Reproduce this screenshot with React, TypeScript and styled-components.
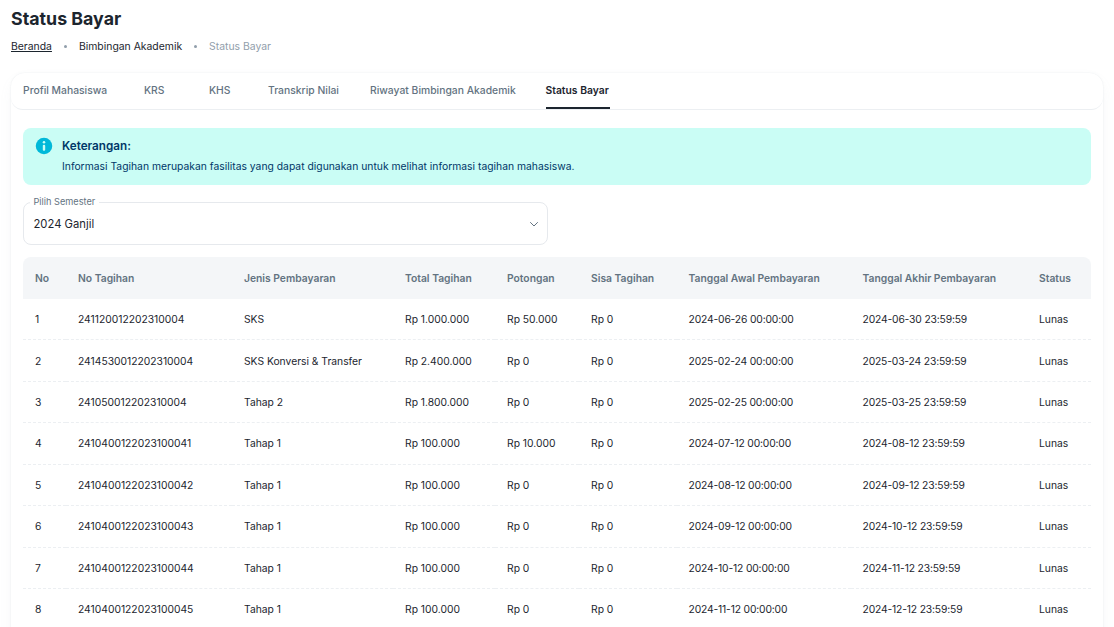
import React from "react";
import styled, { createGlobalStyle } from "styled-components";

const Global = createGlobalStyle`
  html, body { margin: 0; padding: 0; background: #fff; overflow: hidden; height: 627px; }
  body { font-family: Inter, "Liberation Sans", sans-serif; color: #1c252e; }
  * { box-sizing: border-box; }
`;

const Page = styled.div`
  padding: 8px 11px 0 11px;
  width: 1114px;
`;
const Title = styled.h1`
  margin: 0;
  font-size: 17.8px;
  line-height: 21px;
  font-weight: 700;
  color: #1c252e;
`;
const Crumbs = styled.nav`
  display: flex;
  align-items: center;
  margin-top: 9px;
  height: 16px;
  font-size: 10.4px;
  color: #1c252e;
`;
const CrumbLink = styled.a`
  text-decoration: underline;
`;
const CrumbMuted = styled.span`
  color: #919eab;
`;
const Dot = styled.span`
  width: 3px;
  height: 3px;
  border-radius: 50%;
  background: #919eab;
  margin: 0 12px;
`;
const Card = styled.section`
  margin-top: 19px;
  border-radius: 14px;
  background: #fff;
  box-shadow: 0 0 2px rgba(145, 158, 171, 0.2), 0 6px 16px -4px rgba(145, 158, 171, 0.12);
`;
const Tabs = styled.div`
  display: flex;
  align-items: stretch;
  height: 37px;
  padding-left: 12px;
  gap: 30px;
  border-bottom: 1px solid #eceff2;
  border-radius: 0 0 12px 12px;
`;
const Tab = styled.div<{ $active?: boolean; $w: number }>`
  width: ${(p) => p.$w}px;
  padding-bottom: 2px;
  white-space: nowrap;
  display: flex;
  align-items: center;
  font-size: 10.35px;
  font-weight: ${(p) => (p.$active ? 600 : 500)};
  color: ${(p) => (p.$active ? "#1c252e" : "#637381")};
  box-shadow: ${(p) => (p.$active ? "inset 0 -2px 0 #1c252e" : "none")};
`;
const Body = styled.div`
  padding: 18px 12px 24px 12px;
`;
const Alert = styled.div`
  display: flex;
  height: 57px;
  padding: 9px 12px;
  gap: 9px;
  border-radius: 8px;
  background: #cafdf5;
  color: #003768;
`;
const AlertIcon = styled.svg`
  width: 18px;
  height: 18px;
  flex: none;
`;
const AlertTitle = styled.div`
  font-size: 11.7px;
  font-weight: 600;
  line-height: 18px;
`;
const AlertText = styled.div`
  margin-top: 2px;
  font-size: 10.35px;
  line-height: 18px;
`;
const SelectBox = styled.div`
  position: relative;
  margin-top: 17px;
  width: 525px;
  height: 43px;
  display: flex;
  align-items: center;
  justify-content: space-between;
  padding: 0 7px 0 9.5px;
  border: 1px solid #e6e9ed;
  border-radius: 8px;
  font-size: 11.25px;
  color: #1c252e;
`;
const SelectLabel = styled.span`
  position: absolute;
  left: 5.5px;
  top: -7px;
  padding: 0 4px;
  background: #fff;
  font-size: 9.2px;
  line-height: 12px;
  color: #637381;
`;
const Chevron = styled.svg`
  width: 12px;
  height: 12px;
  color: #637381;
`;
const Table = styled.table`
  margin-top: 12px;
  width: 1068px;
  table-layout: fixed;
  border-collapse: separate;
  border-spacing: 0;
  font-size: 10.3px;
`;
const Th = styled.th<{ $w: number }>`
  width: ${(p) => p.$w}px;
  height: 42px;
  padding: 0 0 0 12px;
  background: #f4f6f8;
  color: #637381;
  font-weight: 600;
  text-align: left;
  white-space: nowrap;
  &:first-child { border-radius: 8px 0 0 0; }
  &:last-child { border-radius: 0 8px 0 0; }
`;
const Td = styled.td`
  height: 41.43px;
  padding: 0 0 0 12px;
  color: #1c252e;
  white-space: nowrap;
  border-bottom: 1px dashed #eceff2;
  &:nth-child(7), &:nth-child(8) { letter-spacing: -0.15px; }
`;

const cols: [string, number][] = [
  ["No", 43],
  ["No Tagihan", 166],
  ["Jenis Pembayaran", 161],
  ["Total Tagihan", 102],
  ["Potongan", 84],
  ["Sisa Tagihan", 97.5],
  ["Tanggal Awal Pembayaran", 174],
  ["Tanggal Akhir Pembayaran", 176.5],
  ["Status", 64],
];

const rows = [
  ["1", "241120012202310004", "SKS", "Rp 1.000.000", "Rp 50.000", "Rp 0", "2024-06-26 00:00:00", "2024-06-30 23:59:59", "Lunas"],
  ["2", "2414530012202310004", "SKS Konversi & Transfer", "Rp 2.400.000", "Rp 0", "Rp 0", "2025-02-24 00:00:00", "2025-03-24 23:59:59", "Lunas"],
  ["3", "241050012202310004", "Tahap 2", "Rp 1.800.000", "Rp 0", "Rp 0", "2025-02-25 00:00:00", "2025-03-25 23:59:59", "Lunas"],
  ["4", "2410400122023100041", "Tahap 1", "Rp 100.000", "Rp 10.000", "Rp 0", "2024-07-12 00:00:00", "2024-08-12 23:59:59", "Lunas"],
  ["5", "2410400122023100042", "Tahap 1", "Rp 100.000", "Rp 0", "Rp 0", "2024-08-12 00:00:00", "2024-09-12 23:59:59", "Lunas"],
  ["6", "2410400122023100043", "Tahap 1", "Rp 100.000", "Rp 0", "Rp 0", "2024-09-12 00:00:00", "2024-10-12 23:59:59", "Lunas"],
  ["7", "2410400122023100044", "Tahap 1", "Rp 100.000", "Rp 0", "Rp 0", "2024-10-12 00:00:00", "2024-11-12 23:59:59", "Lunas"],
  ["8", "2410400122023100045", "Tahap 1", "Rp 100.000", "Rp 0", "Rp 0", "2024-11-12 00:00:00", "2024-12-12 23:59:59", "Lunas"],
];

const tabs: [string, number][] = [
  ["Profil Mahasiswa", 91],
  ["KRS", 35],
  ["KHS", 29],
  ["Transkrip Nilai", 72],
  ["Riwayat Bimbingan Akademik", 145.5],
  ["Status Bayar", 64],
];

export default function App() {
  return (
    <Page>
      <Global />
      <Title>Status Bayar</Title>
      <Crumbs>
        <CrumbLink>Beranda</CrumbLink>
        <Dot />
        <span>Bimbingan Akademik</span>
        <Dot />
        <CrumbMuted>Status Bayar</CrumbMuted>
      </Crumbs>
      <Card>
        <Tabs>
          {tabs.map(([t, w]) => (
            <Tab key={t} $w={w} $active={t === "Status Bayar"}>{t}</Tab>
          ))}
        </Tabs>
        <Body>
          <Alert>
            <AlertIcon viewBox="0 0 24 24">
              <circle cx="12" cy="12" r="11" fill="#00b8d9" />
              <circle cx="12" cy="7" r="1.7" fill="#cafdf5" />
              <rect x="10.4" y="10.2" width="3.2" height="8.2" rx="1.4" fill="#cafdf5" />
            </AlertIcon>
            <div>
              <AlertTitle>Keterangan:</AlertTitle>
              <AlertText>Informasi Tagihan merupakan fasilitas yang dapat digunakan untuk melihat informasi tagihan mahasiswa.</AlertText>
            </div>
          </Alert>
          <SelectBox>
            <SelectLabel>Pilih Semester</SelectLabel>
            <span>2024 Ganjil</span>
            <Chevron viewBox="0 0 24 24" fill="none" stroke="currentColor" strokeWidth="2" strokeLinecap="round" strokeLinejoin="round">
              <path d="M5 9l7 7 7-7" />
            </Chevron>
          </SelectBox>
          <Table>
            <thead>
              <tr>
                {cols.map(([c, w]) => <Th key={c} $w={w}>{c}</Th>)}
              </tr>
            </thead>
            <tbody>
              {rows.map((r) => (
                <tr key={r[0]}>
                  {r.map((c, i) => <Td key={i}>{c}</Td>)}
                </tr>
              ))}
            </tbody>
          </Table>
        </Body>
      </Card>
    </Page>
  );
}
